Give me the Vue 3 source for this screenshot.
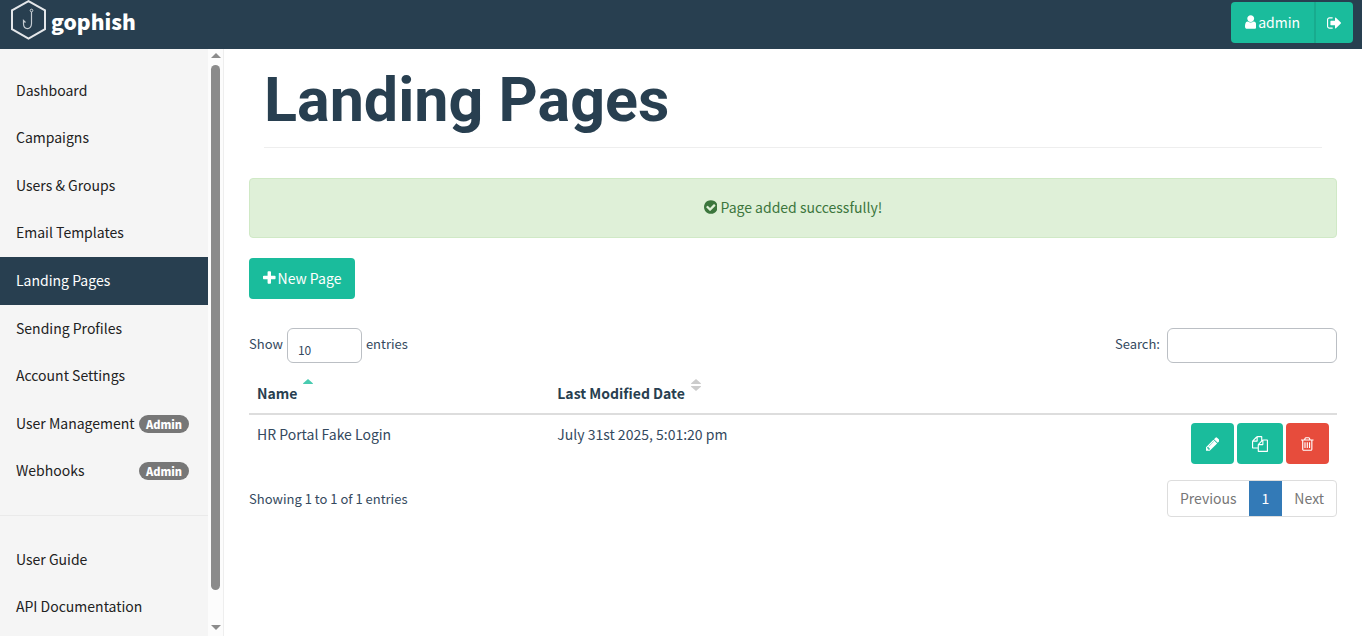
<script setup>
import { ref, computed, h } from 'vue'

const paths = {
  user: 'M1536 1399q0 109-62.5 187t-150.5 78h-854q-88 0-150.5-78t-62.5-187q0-85 8.5-160.5t31.5-152 58.5-131 94-89 134.5-34.5q131 128 313 128t313-128q76 0 134.5 34.5t94 89 58.5 131 31.5 152 8.5 160.5zm-256-887q0 159-112.5 271.5t-271.5 112.5-271.5-112.5-112.5-271.5 112.5-271.5 271.5-112.5 271.5 112.5 112.5 271.5z',
  signOut: 'M704 1440q0 4 1 20t.5 26.5-3 23.5-10 19.5-20.5 6.5h-320q-119 0-203.5-84.5t-84.5-203.5v-704q0-119 84.5-203.5t203.5-84.5h320q13 0 22.5 9.5t9.5 22.5q0 4 1 20t.5 26.5-3 23.5-10 19.5-20.5 6.5h-320q-66 0-113 47t-47 113v704q0 66 47 113t113 47h312l11.5 1 11.5 3 8 5.5 7 9 2 13.5zm928-544q0 26-19 45l-544 544q-19 19-45 19t-45-19-19-45v-288h-448q-26 0-45-19t-19-45v-384q0-26 19-45t45-19h448v-288q0-26 19-45t45-19 45 19l544 544q19 19 19 45z',
  plus: 'M1600 736v192q0 40-28 68t-68 28h-416v416q0 40-28 68t-68 28h-192q-40 0-68-28t-28-68v-416h-416q-40 0-68-28t-28-68v-192q0-40 28-68t68-28h416v-416q0-40 28-68t68-28h192q40 0 68 28t28 68v416h416q40 0 68 28t28 68z',
  check: 'M1412 734q0-28-18-46l-91-90q-19-19-45-19t-45 19l-408 407-226-226q-19-19-45-19t-45 19l-91 90q-18 18-18 46 0 27 18 45l362 362q19 19 45 19 27 0 46-19l543-543q18-18 18-45zm252 162q0 209-103 385.5t-279.5 279.5-385.5 103-385.5-103-279.5-279.5-103-385.5 103-385.5 279.5-279.5 385.5-103 385.5 103 279.5 279.5 103 385.5z',
  pencil: 'M491 1536l91-91-235-235-91 91v107h128v128h107zm523-928q0-22-22-22-10 0-17 7l-542 542q-7 7-7 17 0 22 22 22 10 0 17-7l542-542q7-7 7-17zm-54-192l416 416-832 832h-416v-416zm683 96q0 53-37 90l-166 166-416-416 166-165q36-38 90-38 53 0 91 38l235 234q37 39 37 91z',
  copy: 'M1696 384q40 0 68 28t28 68v1216q0 40-28 68t-68 28h-960q-40 0-68-28t-28-68v-288h-544q-40 0-68-28t-28-68v-672q0-40 20-88t48-76l408-408q28-28 76-48t88-20h416q40 0 68 28t28 68v328q68-40 128-40h416zm-544 213l-299 299h299v-299zm-640-384l-299 299h299v-299zm196 647l316-316v-416h-384v416q0 40-28 68t-68 28h-416v640h512v-256q0-40 20-88t48-76zm956 804v-1152h-384v416q0 40-28 68t-68 28h-416v640h896z',
  trash: 'M704 736v576q0 14-9 23t-23 9h-64q-14 0-23-9t-9-23v-576q0-14 9-23t23-9h64q14 0 23 9t9 23zm256 0v576q0 14-9 23t-23 9h-64q-14 0-23-9t-9-23v-576q0-14 9-23t23-9h64q14 0 23 9t9 23zm256 0v576q0 14-9 23t-23 9h-64q-14 0-23-9t-9-23v-576q0-14 9-23t23-9h64q14 0 23 9t9 23zm128 724v-948h-896v948q0 22 7 40.5t14.5 27 10.5 8.5h832q3 0 10.5-8.5t14.5-27 7-40.5zm-672-1076h448l-48-117q-7-9-17-11h-317q-10 2-17 11zm928 32v64q0 14-9 23t-23 9h-96v948q0 83-47 143.5t-113 60.5h-832q-66 0-113-58.5t-47-141.5v-952h-96q-14 0-23-9t-9-23v-64q0-14 9-23t23-9h309l70-167q15-37 54-63t79-26h320q40 0 79 26t54 63l70 167h309q14 0 23 9t9 23z',
}

// Horizontal crop of each glyph: [left, width] on a 1792-unit grid
const boxes = {
  user: [256, 1280],
  signOut: [64, 1664],
  plus: [192, 1408],
  check: [128, 1536],
  pencil: [128, 1536],
  copy: [0, 1792],
  trash: [192, 1408],
}

const Icon = ({ name }) =>
  h('svg', { class: 'icon', viewBox: `${boxes[name][0]} 0 ${boxes[name][1]} 1792`, height: 16, fill: 'currentColor', 'aria-hidden': 'true' }, [
    h('path', { d: paths[name] }),
  ])
Icon.props = ['name']

const menu = [
  { label: 'Dashboard' },
  { label: 'Campaigns' },
  { label: 'Users & Groups' },
  { label: 'Email Templates' },
  { label: 'Landing Pages', active: true },
  { label: 'Sending Profiles' },
  { label: 'Account Settings' },
  { label: 'User Management', badge: 'Admin' },
  { label: 'Webhooks', badge: 'Admin' },
]
const docs = ['User Guide', 'API Documentation']

const pages = ref([{ name: 'HR Portal Fake Login', modified: 'July 31st 2025, 5:01:20 pm' }])
const query = ref('')
const size = ref('10')
const rows = computed(() => pages.value.filter((p) => p.name.toLowerCase().includes(query.value.toLowerCase())))
</script>

<template>
  <div class="app">
    <header class="topbar">
      <a class="brand" href="#">
        <svg class="logo" viewBox="0 0 36 40" width="36" height="40" fill="none" aria-hidden="true">
          <path d="M18.500 1.200 35 10.400V29.200L18.500 38.600 2 29.200V10.400Z" stroke="#e4e7ea" stroke-width="2" />
          <circle cx="21.500" cy="10.500" r="1.300" stroke="#d5dade" />
          <path d="M21.500 12V23.500C21.500 30.500 13.500 30 13.500 23.500V20.500L15.500 22.500" stroke="#c5ccd2" stroke-width="1.200" />
        </svg>
        <span>gophish</span>
      </a>
      <div class="account">
        <button class="btn account-name" type="button"><Icon name="user" />admin</button>
        <button class="btn account-exit" type="button" aria-label="Sign out"><Icon name="signOut" /></button>
      </div>
    </header>

    <div class="body">
      <aside class="sidebar">
        <nav class="menu">
          <ul class="menu-main">
            <li v-for="item in menu" :key="item.label">
              <a href="#" :class="{ active: item.active }">
                {{ item.label }}<span v-if="item.badge" class="badge">{{ item.badge }}</span>
              </a>
            </li>
          </ul>
          <hr class="menu-rule" />
          <ul class="menu-docs">
            <li v-for="doc in docs" :key="doc"><a href="#">{{ doc }}</a></li>
          </ul>
        </nav>
        <div class="scroll" aria-hidden="true">
          <svg viewBox="0 0 10 5" width="10" height="5"><path d="M0 5 5 0 10 5Z" fill="#8b8b8b" /></svg>
          <div class="scroll-track"><div class="scroll-thumb"></div></div>
          <svg viewBox="0 0 10 5" width="10" height="5"><path d="M0 0 5 5 10 0Z" fill="#8b8b8b" /></svg>
        </div>
      </aside>

      <main class="main">
        <h1>Landing Pages</h1>
        <div class="alert" role="status"><Icon name="check" />Page added successfully!</div>
        <button class="btn new-page" type="button"><Icon name="plus" />New Page</button>

        <div class="controls">
          <label class="length">
            Show
            <select v-model="size">
              <option>10</option>
              <option>25</option>
              <option>50</option>
              <option>100</option>
            </select>
            entries
          </label>
          <label class="search">Search:<input v-model="query" type="search" /></label>
        </div>

        <table>
          <thead>
            <tr>
              <th class="col-name">
                <div class="head">Name
                  <svg class="sort" viewBox="0 0 10 12" width="10" height="12"><path d="M0 5Q0 4 1 3.500L5 0 9 3.500Q10 4 10 5Z" fill="#49cbb0" /></svg>
                </div>
              </th>
              <th class="col-date">
                <div class="head">Last Modified Date
                  <svg class="sort" viewBox="0 0 10 12" width="10" height="12"><path d="M0 5Q0 4 1 3.500L5 0 9 3.500Q10 4 10 5ZM0 7Q0 8 1 8.500L5 12 9 8.500Q10 8 10 7Z" fill="#ccc" /></svg>
                </div>
              </th>
              <th></th>
            </tr>
          </thead>
          <tbody>
            <tr v-for="page in rows" :key="page.name">
              <td>{{ page.name }}</td>
              <td>{{ page.modified }}</td>
              <td>
                <div class="actions">
                  <button class="btn" type="button" aria-label="Edit page"><Icon name="pencil" /></button>
                  <button class="btn" type="button" aria-label="Copy page"><Icon name="copy" /></button>
                  <button class="btn danger" type="button" aria-label="Delete page"><Icon name="trash" /></button>
                </div>
              </td>
            </tr>
          </tbody>
        </table>

        <div class="table-foot">
          <div class="info">Showing 1 to 1 of 1 entries</div>
          <nav class="pager" aria-label="Pagination">
            <a href="#">Previous</a>
            <a href="#" class="current" aria-current="page">1</a>
            <a href="#">Next</a>
          </nav>
        </div>
      </main>
    </div>
  </div>
</template>

<style>
body {
  overflow: hidden;
}
</style>

<style scoped>
.app,
.app * {
  box-sizing: border-box;
}
.app {
  display: flex;
  flex-direction: column;
  height: 100vh;
  background: #fff;
  color: #34495e;
  font-family: "Noto Sans CJK SC", "Noto Sans", sans-serif;
  font-size: 14px;
  line-height: 20px;
}
a {
  color: inherit;
  text-decoration: none;
}
.topbar {
  display: flex;
  flex: none;
  justify-content: space-between;
  height: 49px;
  padding: 0 9px 0 10px;
  background: #283f50;
}
.brand {
  display: flex;
  gap: 5px;
  color: #fff;
  font-size: 21px;
  font-weight: 900;
  line-height: 43px;
}
.logo {
  flex: none;
}
.btn {
  display: inline-flex;
  align-items: center;
  justify-content: center;
  gap: 2px;
  height: 41px;
  padding: 0 14px 1px;
  border: 0;
  border-radius: 4px;
  background: #1abc9c;
  color: #fff;
  font-family: inherit;
  font-size: 14px;
  line-height: 20px;
}
.icon {
  flex: none;
}
.account {
  display: flex;
  margin-top: 2px;
}
.account-name {
  border-radius: 4px 0 0 4px;
}
.account-exit {
  padding: 0 11px;
  border-left: 2px solid #18ab8e;
  border-radius: 0 4px 4px 0;
}
.body {
  display: flex;
  flex: 1;
  min-height: 0;
}
.sidebar {
  display: flex;
  flex: none;
  width: 224px;
  border-right: 1px solid #eee;
  background: #f5f5f5;
  color: #222;
}
.menu {
  flex: 1;
  padding-top: 18px;
  overflow: hidden;
}
.menu ul {
  display: grid;
  grid-auto-rows: 1fr;
  margin: 0;
  padding: 0;
  list-style: none;
}
.menu-main {
  height: 428px;
}
.menu-docs {
  height: 95px;
}
.menu a {
  display: flex;
  align-items: center;
  justify-content: space-between;
  height: 100%;
  padding: 0 19px 2px 16px;
  white-space: nowrap;
}
.menu a.active {
  background: #283f50;
  color: #fff;
}
.menu-rule {
  height: 1px;
  margin: 20px 0;
  border: 0;
  background: #eaeaea;
}
.badge {
  margin-top: 2px;
  padding: 0 7px;
  border-radius: 9px;
  background: #777;
  color: #fff;
  font-size: 11px;
  font-weight: 900;
  line-height: 18px;
}
.scroll {
  display: flex;
  flex: none;
  flex-direction: column;
  align-items: center;
  gap: 7px;
  width: 15px;
  padding: 4px 0 6px;
  background: #fcfcfc;
}
.scroll-track {
  flex: 1;
  width: 9px;
}
.scroll-thumb {
  height: 95%;
  border-radius: 5px;
  background: #8b8b8b;
}
.main {
  flex: 1;
  min-width: 0;
  padding: 15px 25px;
}
h1 {
  margin: 0 15px 30px;
  padding-bottom: 11px;
  border-bottom: 1px solid #eee;
  color: #283f50;
  font-family: Roboto, sans-serif;
  font-size: 61px;
  font-weight: 700;
  line-height: 72px;
}
.alert {
  display: flex;
  align-items: center;
  justify-content: center;
  gap: 3px;
  height: 60px;
  margin-bottom: 20px;
  padding-bottom: 2px;
  border: 1px solid #d0e9c6;
  border-radius: 4px;
  background: #dff0d8;
  color: #3c763d;
}
.controls {
  display: flex;
  justify-content: space-between;
  margin-top: 29px;
  font-size: 13px;
  line-height: 31px;
}
.length,
.search {
  display: flex;
  align-items: flex-start;
  gap: 4px;
}
.search {
  gap: 7px;
}
select,
input {
  height: 35px;
  margin: 0;
  border: 1px solid #bbbfc4;
  border-radius: 6px;
  outline: 0;
  background: #fff;
  color: #34495e;
  font-family: inherit;
  appearance: none;
}
select {
  width: 75px;
  padding: 7px 10px 0;
  font-size: 12px;
}
input {
  width: 170px;
  padding: 6px 10px;
  font-size: 14px;
}
table {
  width: 100%;
  margin-top: 6px;
  border-collapse: collapse;
  table-layout: fixed;
}
th {
  padding: 10px 8px;
  border-bottom: 2px solid #ddd;
  color: #283f50;
  text-align: left;
}
.col-name {
  width: 27.6%;
}
.col-date {
  width: 39%;
}
.head {
  display: flex;
  gap: 6px;
  padding-top: 4px;
}
.sort {
  margin-top: -4px;
}
td {
  padding: 8px;
  line-height: 22px;
  vertical-align: top;
}
.actions {
  display: flex;
  justify-content: flex-end;
  gap: 3px;
}
.actions .btn {
  padding: 0 15px;
}
.btn.danger {
  background: #e74c3c;
}
.table-foot {
  display: flex;
  justify-content: space-between;
  margin-top: 8px;
}
.info {
  font-size: 13px;
  line-height: 37px;
}
.pager {
  display: flex;
  overflow: hidden;
  border: 1px solid #ddd;
  border-radius: 4px;
  color: #777;
}
.pager a {
  padding: 0 12px;
  line-height: 35px;
}
.pager .current {
  margin: -1px 0;
  padding: 0 13px;
  background: #337ab7;
  color: #fff;
  line-height: 37px;
}
</style>
